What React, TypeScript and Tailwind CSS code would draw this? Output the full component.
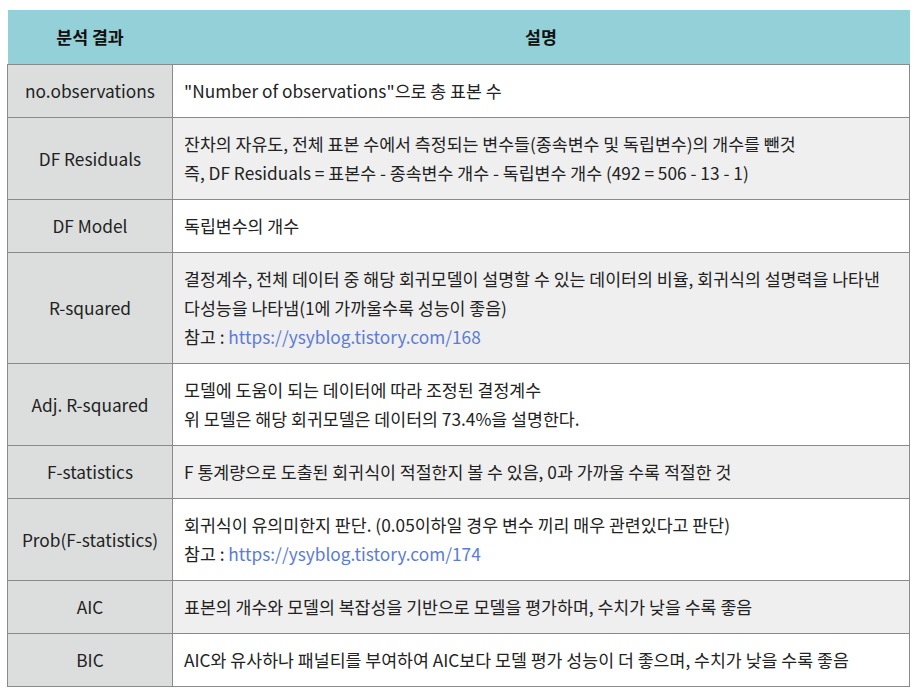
import React from 'react';

type Row = { name: string; lines: React.ReactNode[] };

const link = (url: string) => (
  <>
    참고 : <span className="text-[#5b7bd6]">{url}</span>
  </>
);

const rows: Row[] = [
  { name: 'no.observations', lines: ['"Number of observations"으로 총 표본 수'] },
  {
    name: 'DF Residuals',
    lines: [
      '잔차의 자유도, 전체 표본 수에서 측정되는 변수들(종속변수 및 독립변수)의 개수를 뺀것',
      '즉, DF Residuals = 표본수 - 종속변수 개수 - 독립변수 개수 (492 = 506 - 13 - 1)',
    ],
  },
  { name: 'DF Model', lines: ['독립변수의 개수'] },
  {
    name: 'R-squared',
    lines: [
      '결정계수, 전체 데이터 중 해당 회귀모델이 설명할 수 있는 데이터의 비율, 회귀식의 설명력을 나타낸',
      '다성능을 나타냄(1에 가까울수록 성능이 좋음)',
      link('https://ysyblog.tistory.com/168'),
    ],
  },
  {
    name: 'Adj. R-squared',
    lines: ['모델에 도움이 되는 데이터에 따라 조정된 결정계수', '위 모델은 해당 회귀모델은 데이터의 73.4%을 설명한다.'],
  },
  { name: 'F-statistics', lines: ['F 통계량으로 도출된 회귀식이 적절한지 볼 수 있음, 0과 가까울 수록 적절한 것'] },
  {
    name: 'Prob(F-statistics)',
    lines: ['회귀식이 유의미한지 판단. (0.05이하일 경우 변수 끼리 매우 관련있다고 판단)', link('https://ysyblog.tistory.com/174')],
  },
  { name: 'AIC', lines: ['표본의 개수와 모델의 복잡성을 기반으로 모델을 평가하며, 수치가 낮을 수록 좋음'] },
  { name: 'BIC', lines: ['AIC와 유사하나 패널티를 부여하여 AIC보다 모델 평가 성능이 더 좋으며, 수치가 낮을 수록 좋음'] },
];

export default function App() {
  return (
    <div
      className="w-[917px] h-[700px] bg-white pt-[10px] pl-[7px] text-[17.3px] text-[#222]"
      style={{ fontFamily: '"Noto Sans CJK KR", "Noto Sans", sans-serif' }}
    >
      <table className="w-[903px] border-collapse leading-[29px]">
        <thead>
          <tr className="bg-[#94d0d7] h-[54px]">
            <th className="w-[165px] font-bold text-[#111] text-center">분석 결과</th>
            <th className="font-bold text-[#111] text-center">설명</th>
          </tr>
        </thead>
        <tbody>
          {rows.map((r, i) => (
            <tr key={r.name} className={i % 2 === 1 ? 'bg-[#efefef]' : 'bg-white'}>
              <td className="border border-[#8a8a8a] bg-[#dcdedd] text-center py-[11.5px] px-1">{r.name}</td>
              <td className="border border-[#8a8a8a] py-[11.5px] pl-[11px] pr-1">
                {r.lines.map((l, j) => (
                  <div key={j} className="whitespace-nowrap">
                    {l}
                  </div>
                ))}
              </td>
            </tr>
          ))}
        </tbody>
      </table>
    </div>
  );
}
